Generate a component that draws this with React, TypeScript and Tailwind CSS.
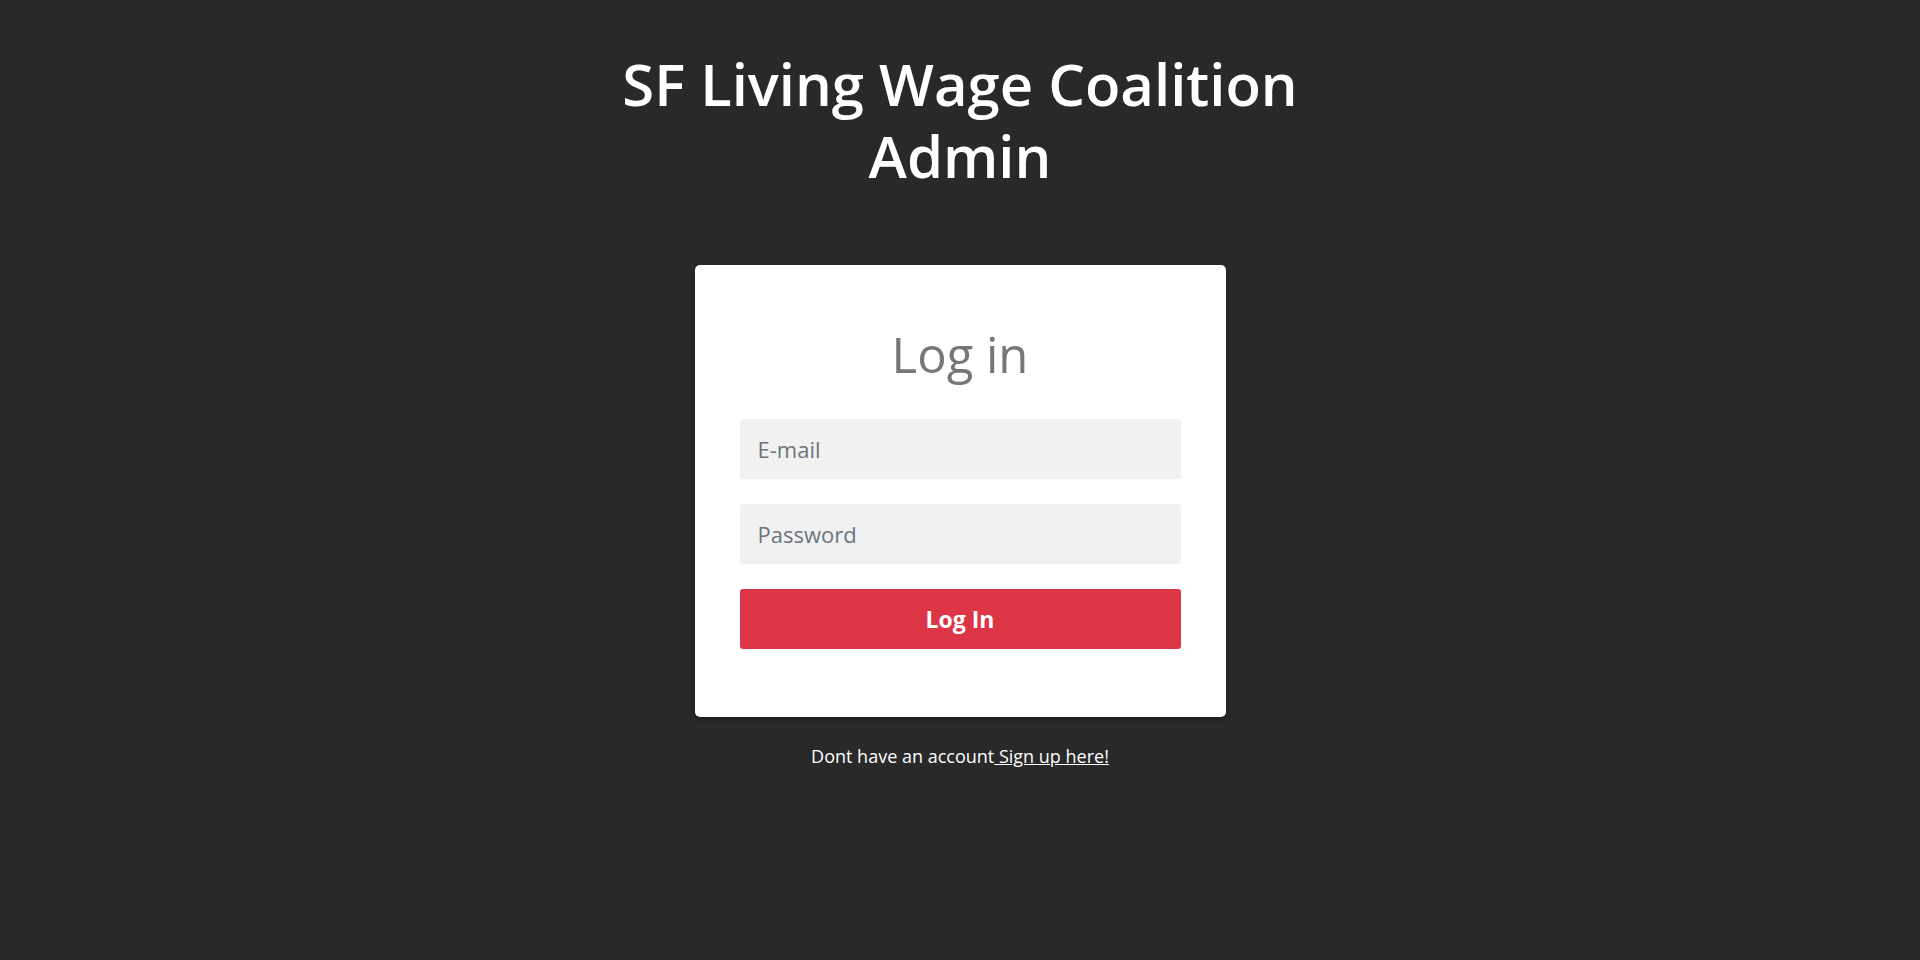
import React, { useState } from 'react';

export default function App() {
  const [email, setEmail] = useState('');
  const [password, setPassword] = useState('');

  return (
    <div className="min-h-screen w-full bg-[#292929] font-['Open_Sans',sans-serif] flex flex-col items-center pt-[48px]">
      {/* Title */}
      <h1 className="text-center text-white font-semibold text-[58px] leading-[72px]">
        SF Living Wage Coalition
        <br />
        Admin
      </h1>

      {/* Login card */}
      <div className="mt-[73px] w-[531px] bg-white rounded-[5px] shadow-[0_2px_4px_rgba(0,0,0,0.35)] px-[45px] pt-[61px] pb-[68px]">
        <h2 className="text-center text-[#777777] text-[49px] leading-[56px] mb-[37px]">Log in</h2>
        <form className="flex flex-col gap-[25px]" onSubmit={(e) => e.preventDefault()}>
          <input
            type="email"
            value={email}
            onChange={(e) => setEmail(e.target.value)}
            placeholder="E-mail"
            className="h-[60px] w-full rounded-[3px] bg-[#f1f1f1] px-[18px] text-[22px] text-[#495057] placeholder:text-[#6c757d] outline-none"
          />
          <input
            type="password"
            value={password}
            onChange={(e) => setPassword(e.target.value)}
            placeholder="Password"
            className="h-[60px] w-full rounded-[3px] bg-[#f1f1f1] px-[18px] text-[22px] text-[#495057] placeholder:text-[#6c757d] outline-none"
          />
          <button
            type="submit"
            className="h-[60px] w-full rounded-[3px] bg-[#dc3545] text-white font-bold text-[23px]"
          >
            Log In
          </button>
        </form>
      </div>

      <p className="mt-[26px] text-white text-[18px] leading-[26px]">
        Dont have an account
        <a href="#" className="underline"> Sign up here!</a>
      </p>
    </div>
  );
}
